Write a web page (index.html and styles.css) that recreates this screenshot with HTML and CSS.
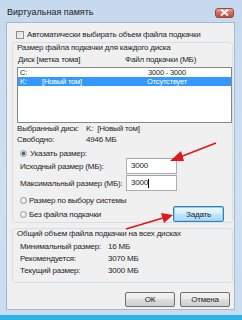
FILE: index.html
```html
<!DOCTYPE html>
<html lang="ru">
<head>
<meta charset="UTF-8">
<title>Виртуальная память</title>
<link rel="stylesheet" href="styles.css">
</head>
<body>
    <div class="window">
        <div class="titlebar">
            <span class="title">Виртуальная память</span>
            <span class="close">
                <svg width="9" height="7" viewBox="0 0 9 7"><path d="M1 0.5 L8 6.5 M8 0.5 L1 6.5" stroke="#fff" stroke-width="1.8"/></svg>
            </span>
        </div>
        <div class="panel">
            <div class="check-row"><span class="checkbox"></span>Автоматически выбирать объем файла подкачки</div>

            <div class="group group-disk">
                <div class="group-title">Размер файла подкачки для каждого диска</div>
                <div class="cols">
                    <span class="col-disk">Диск [метка тома]</span>
                    <span>Файл подкачки (МБ)</span>
                </div>
                <div class="listbox">
                    <div class="row">
                        <span class="c-drive">C:</span><span class="c-label"></span><span class="c-size">3000 - 3000</span>
                    </div>
                    <div class="row sel">
                        <span class="c-drive">K:</span><span class="c-label">[Новый том]</span><span class="c-size">Отсутствует</span>
                    </div>
                </div>
                <div class="info">
                    <div class="kv"><span class="k">Выбранный диск:</span><span>K:&nbsp; [Новый том]</span></div>
                    <div class="kv"><span class="k">Свободно:</span><span>4946 МБ</span></div>
                </div>
                <div class="radio-row first"><span class="radio on"></span>Указать размер:</div>
                <div class="size-row"><span class="size-label">Исходный размер (МБ):</span><span class="field">3000</span></div>
                <div class="size-row second"><span class="size-label">Максимальный размер (МБ):</span><span class="field">3000<span class="caret"></span></span></div>
                <div class="radio-row sys"><span class="radio"></span>Размер по выбору системы</div>
                <div class="radio-row last">
                    <span class="radio"></span>Без файла подкачки
                    <span class="btn btn-set">Задать</span>
                </div>
            </div>

            <div class="group group-total">
                <div class="group-title">Общий объем файла подкачки на всех дисках</div>
                <div class="totals">
                    <div class="kv"><span class="k">Минимальный размер:</span><span>16 МБ</span></div>
                    <div class="kv"><span class="k">Рекомендуется:</span><span>3070 МБ</span></div>
                    <div class="kv"><span class="k">Текущий размер:</span><span>3000 МБ</span></div>
                </div>
            </div>

            <div class="buttons">
                <span class="btn">ОК</span>
                <span class="btn">Отмена</span>
            </div>
        </div>
        <div class="desktop"></div>

        <!-- красные стрелки поверх окна -->
        <svg class="arrows" width="242" height="320" viewBox="0 0 242 320">
            <path d="M216 143 L180 157" stroke="#e2161d" stroke-width="1.7" fill="none"/>
            <path d="M170 161 L181 151 L184 161 Z" fill="#e2161d"/>
            <path d="M126 229 L163 218" stroke="#e2161d" stroke-width="1.7" fill="none"/>
            <path d="M173 215 L161 213 L164 223 Z" fill="#e2161d"/>
        </svg>
    </div>
</body>
</html>
```

FILE: styles.css
```css
body{
    margin: 0;
    background: #2fb3e6;
}
.window{
    position: relative;
    width: 242px;
    height: 320px;
    background: linear-gradient(#c6d9ee, #cfe0f2 60%, #c9dcf0);
    font-family: "Liberation Sans", Arial, sans-serif;
    font-size: 8px;
    letter-spacing: -0.2px;
    color: #1e1e1e;
    white-space: nowrap;
    overflow: hidden;
}
.titlebar{
    height: 22px;
    display: flex;
    align-items: center;
    justify-content: space-between;
}
.title{
    margin-left: 7px;
    margin-top: 2px;
    font-size: 9px;
    letter-spacing: 0;
    color: #1a1a1a;
}
.close{
    width: 19px;
    height: 10px;
    margin-right: 8px;
    margin-top: 3px;
    border: 1px solid #8d4b45;
    border-radius: 3px;
    background: linear-gradient(#e9a99a, #d26a5b 50%, #c64a3d);
    display: flex;
    align-items: center;
    justify-content: center;
    box-sizing: border-box;
}
.panel{
    margin-left: 6px;
    width: 229px;
    height: 288px;
    box-sizing: border-box;
    border: 1px solid #a7b8cc;
    background: #f0f0f0;
}
.check-row{
    margin-top: 6px;
    height: 11px;
    padding-left: 9px;
    display: flex;
    align-items: center;
}
.checkbox{
    width: 8px;
    height: 8px;
    box-sizing: border-box;
    border: 1px solid #8f8f8f;
    background: linear-gradient(135deg, #dcdcdc, #f8f8f8);
    margin-right: 3px;
}
.group{
    margin-left: 5px;
    width: 221px;
    box-sizing: border-box;
    border: 1px solid #d5dfe5;
    border-radius: 3px;
}
.group-disk{
    margin-top: 2px;
    height: 181px;
}
.group-total{
    margin-top: 5px;
    height: 55px;
}
.group-title{
    margin-top: -2px;
    margin-left: 2px;
    padding: 0 2px;
    line-height: 10px;
    background: #f0f0f0;
    display: inline-block;
}
.cols{
    margin-top: 2px;
    line-height: 10px;
    padding-left: 5px;
    display: flex;
}
.col-disk{
    width: 107px;
}
.listbox{
    margin-top: 2px;
    margin-left: 4px;
    width: 215px;
    height: 56px;
    box-sizing: border-box;
    border: 1px solid #828790;
    background: #fff;
}
.row{
    height: 9px;
    line-height: 9px;
    font-size: 7.5px;
    display: flex;
    padding-left: 2px;
}
.row.sel{
    background: #3399ff;
    color: #fff;
}
.c-drive{
    width: 22px;
}
.c-label{
    width: 95px;
}
.c-size{
    width: 60px;
    text-align: center;
}
.info{
    margin-top: 0;
    padding-left: 4px;
}
.kv{
    display: flex;
    line-height: 11px;
}
.kv .k{
    flex-shrink: 0;
}
.info .k{
    width: 69px;
}
.radio-row{
    display: flex;
    align-items: center;
    padding-left: 7px;
    height: 10px;
}
.radio-row.first{
    margin-top: 3px;
    padding-left: 7px;
}
.radio-row.sys{
    margin-top: 4px;
}
.radio-row.last{
    margin-top: 1px;
    height: 16px;
}
.radio{
    width: 7px;
    height: 7px;
    box-sizing: border-box;
    border-radius: 50%;
    border: 1px solid #9a9a9a;
    background: radial-gradient(circle at 40% 40%, #fafafa, #d8d8d8);
    margin-right: 2px;
}
.radio-row.first .radio{
    margin-right: 3px;
}
.radio.on{
    background: radial-gradient(circle, #1d4f7a 0, #3d7bb0 1.6px, #e8eef3 2.2px, #d2d8de);
}
.size-row{
    display: flex;
    align-items: center;
    height: 16px;
    padding-left: 7px;
}
.size-row.second{
    margin-top: 1px;
}
.size-label{
    width: 106px;
}
.field{
    width: 51px;
    height: 16px;
    box-sizing: border-box;
    border: 1px solid #abadb3;
    border-top-color: #9ea3ab;
    background: #fff;
    padding-left: 4px;
    line-height: 14px;
    display: flex;
    align-items: center;
}
.caret{
    width: 1px;
    height: 9px;
    background: #000;
}
.btn{
    height: 15px;
    width: 50px;
    box-sizing: border-box;
    border: 1px solid #707070;
    border-radius: 2px;
    background: linear-gradient(#f3f3f3, #ebebeb 45%, #dddddd 50%, #cfcfcf);
    display: flex;
    align-items: center;
    justify-content: center;
}
.btn-set{
    margin-left: auto;
    margin-right: 8px;
    width: 51px;
    height: 16px;
    border-color: #3c7fb1;
    background: linear-gradient(#eaf6fd, #d9f0fc 45%, #bee6fd 50%, #a7d9f5);
    box-shadow: inset 0 0 0 1px #8ad0f3;
}
.totals{
    margin-top: 2px;
    padding-left: 7px;
}
.totals .kv{
    line-height: 12px;
}
.totals .k{
    width: 88px;
}
.buttons{
    margin-top: 9px;
    margin-right: 4px;
    display: flex;
    justify-content: flex-end;
    gap: 5px;
}
.desktop{
    margin-top: 5px;
    height: 5px;
    background: #2fb3e6;
}
.arrows{
    position: absolute;
    left: 0;
    top: 0;
}
```
